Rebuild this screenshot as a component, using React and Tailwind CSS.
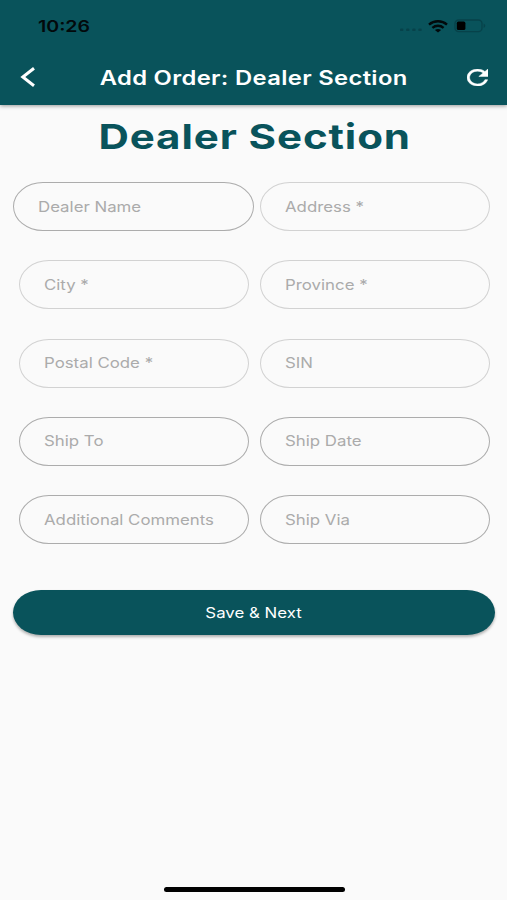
import clsx from 'clsx';

const rows = [
  [
    { label: 'Dealer Name', dark: true, wide: true },
    { label: 'Address *' },
  ],
  [{ label: 'City *' }, { label: 'Province *' }],
  [{ label: 'Postal Code *' }, { label: 'SIN' }],
  [
    { label: 'Ship To', dark: true },
    { label: 'Ship Date', dark: true },
  ],
  [
    { label: 'Additional Comments', dark: true },
    { label: 'Ship Via', dark: true },
  ],
];

const StatusBar = () => (
  <div className="flex h-[52px] items-center justify-between pl-[38px] pr-[21px] text-[#02090b]">
    <span className="origin-left scale-x-[1.22] text-[16px] leading-[20px] font-semibold">10:26</span>
    <div className="flex items-center">
      <svg width="22" height="4" viewBox="0 0 22 4" className="mt-[8px]" fill="#07424a">
        <rect x="0" y="0.5" width="3.4" height="2.6" rx="1.2" />
        <rect x="6.1" y="0.5" width="3.4" height="2.6" rx="1.2" />
        <rect x="12.2" y="0.5" width="3.4" height="2.6" rx="1.2" />
        <rect x="18.3" y="0.5" width="3.4" height="2.6" rx="1.2" />
      </svg>
      <svg width="20" height="13" viewBox="0 0 20 13" className="ml-[6px]" fill="none" stroke="currentColor" strokeWidth="2.4">
        <path d="M1 4.6C6 .2 14 .2 19 4.6" />
        <path d="M4.4 7.8c3.2-2.7 8-2.7 11.2 0" />
        <path d="M10 12.4 6.9 9.9c1.8-1.3 4.4-1.3 6.2 0z" fill="currentColor" stroke="none" />
      </svg>
      <svg width="32" height="14" viewBox="0 0 32 14" className="ml-[6px]">
        <rect x="1" y="1" width="27" height="11.6" rx="3.6" fill="none" stroke="#07424a" strokeWidth="1.3" />
        <path d="M29.6 4.6c2.2.8 2.2 3.6 0 4.4z" fill="#07424a" />
        <rect x="2.8" y="2.6" width="8.6" height="8.4" rx="1.6" fill="#000" />
      </svg>
    </div>
  </div>
);

const Header = () => (
  <header className="h-[105px] bg-[#09535b] shadow-[0_1px_4px_rgba(0,0,0,0.4)]">
    <StatusBar />
    <div className="flex h-[50px] items-center justify-between pl-[20px] pr-[19px] text-white">
      <svg width="16" height="20" viewBox="0 0 16 20" fill="none" stroke="currentColor" strokeWidth="3">
        <path d="M14 1.2 2.8 10 14 18.8" />
      </svg>
      <h1 className="scale-x-[1.22] pt-px pl-[4px] text-[19.5px] leading-[24px] font-semibold tracking-[0.27px] whitespace-nowrap">
        Add Order: Dealer Section
      </h1>
      <svg width="21" height="17" viewBox="4 4 16 16" preserveAspectRatio="none" fill="currentColor" stroke="currentColor" strokeWidth="0.4">
        <path d="M17.65 6.35C16.2 4.9 14.21 4 12 4c-4.42 0-7.99 3.58-7.99 8s3.57 8 7.99 8c3.73 0 6.84-2.55 7.73-6h-2.08c-.82 2.33-3.04 4-5.65 4-3.31 0-6-2.69-6-6s2.69-6 6-6c1.66 0 3.14.69 4.22 1.78L13 11h7V4l-2.35 2.35z" />
      </svg>
    </div>
  </header>
);

const Field = ({ label, dark, wide }) => (
  <div
    className={clsx(
      'flex h-[49px] items-center rounded-[30px/24.5px] border pl-[24px]',
      dark ? 'border-[#acacac]' : 'border-[#d2d2d2]',
      wide ? '-ml-[6px] w-[241px]' : 'w-[230px]',
    )}
  >
    <span className="origin-left scale-x-[1.16] text-[14.5px] leading-[20px] whitespace-nowrap text-[#ababab]">
      {label}
    </span>
  </div>
);

const App = () => (
  <div className="flex h-[900px] w-[507px] flex-col overflow-hidden bg-[#fafafa] font-['Inter','Liberation_Sans',sans-serif]">
    <Header />
    <main className="flex flex-1 flex-col">
      <h2 className="mt-[10px] scale-x-[1.22] pl-[2px] text-center text-[34.5px] leading-[44px] font-bold tracking-[0.72px] whitespace-nowrap text-[#09535b]">
        Dealer Section
      </h2>
      <div className="mt-[23px] flex flex-col gap-[29.3px] pr-[17.4px] pl-[18.6px]">
        {rows.map(([left, right]) => (
          <div key={left.label} className="flex justify-between">
            <Field {...left} />
            <Field {...right} />
          </div>
        ))}
      </div>
      <button className="mr-[12px] ml-[13px] mt-[46px] flex h-[45px] items-center justify-center rounded-[28px/22.5px] bg-[#09535b] text-white shadow-[0_2px_3px_rgba(0,0,0,0.3)]">
        <span className="scale-x-[1.16] text-[14.5px] leading-[20px]">Save &amp; Next</span>
      </button>
    </main>
    <footer className="flex h-[13px] justify-center pl-px">
      <div className="h-[5px] w-[181px] rounded-full bg-black" />
    </footer>
  </div>
);

export default App;
